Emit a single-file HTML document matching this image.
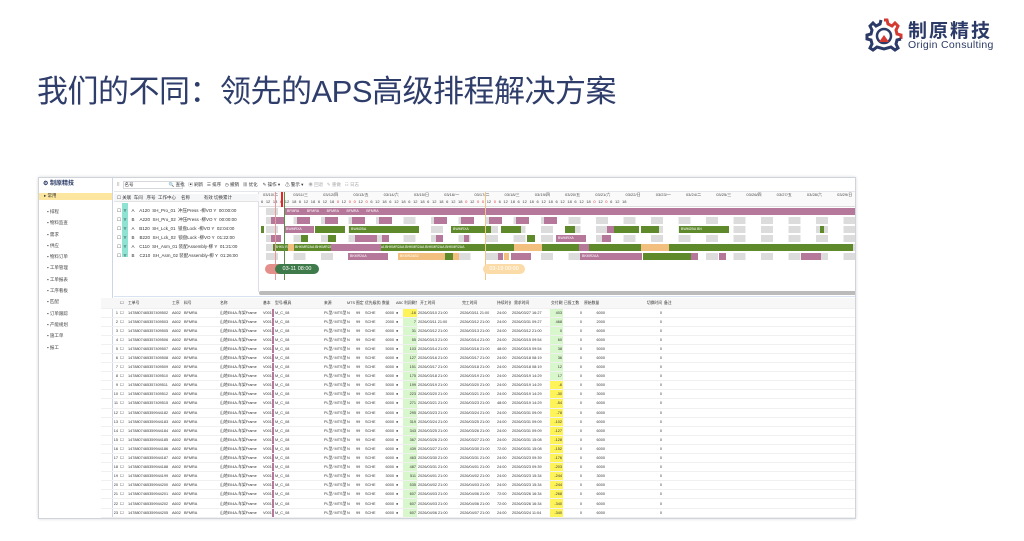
<!DOCTYPE html>
<html><head><meta charset="utf-8"><style>
*{margin:0;padding:0;box-sizing:border-box}
body{width:1024px;height:541px;background:#fff;position:relative;overflow:hidden;font-family:"Liberation Sans","Noto Sans CJK SC",sans-serif}
.a{position:absolute}
.t{font-size:4.5px;color:#333;white-space:nowrap;line-height:1}
.frame{left:38px;top:177px;width:818px;height:342px;border:1px solid #cfd3da;box-shadow:0 0 3px rgba(0,0,0,.15);background:#fff;overflow:hidden}
.bar{position:absolute;height:7px;font-size:3.5px;color:#fff;line-height:7px;padding-left:2px;overflow:hidden;white-space:nowrap}
.p{background:#b5779a}.g{background:#5e8a2b}.o{background:#f2bf7e}
.row{position:absolute;width:598px;height:9px;background:repeating-linear-gradient(90deg,#dcdcdc 0 12px,transparent 12px 27.5px);background-position:7px 0;background-size:auto 7px;background-repeat:repeat-x}
table.lt{position:absolute;left:62px;top:120px;border-collapse:collapse;table-layout:fixed;width:756px}
.lt td{height:9.1px;font-size:3.8px;color:#333;white-space:nowrap;overflow:hidden;padding:0 1px;border-bottom:1px solid #f0f0f0;line-height:8px}
.lt tr.h td{height:10px;background:#f7f7f7;font-size:3.8px}
.lt td.r{text-align:right}
.lt td.gc{background:#d9f7cc}.lt td.yc{background:#fff35a}
.lt td.pk{background:#b5779a;padding:0}
.dot{color:#f5c518}
</style></head><body>

<svg class="a" style="left:864px;top:17px" width="40" height="36" viewBox="0 0 40 36">
<path d="M20 3 L23 3 L24 7 L28 9 L31 6 L34 9 L32 13 L33 17 L37 18 L37 22" fill="none" stroke="#d33a32" stroke-width="3"/>
<path d="M17 3 L16 7 L12 9 L9 6 L6 9 L8 13 L7 17 L3 18 L3 22 L7 23 L8 27 L6 31 L9 33 L13 30 L20 32 L27 30 L31 33 L34 31 L32 27 L33 23 L37 22" fill="none" stroke="#2b3a66" stroke-width="3"/>
<circle cx="20" cy="19" r="7" fill="none" stroke="#2b3a66" stroke-width="2.5"/>
<path d="M15 25 L20 18 L25 25" fill="#d33a32"/>
</svg>
<div class="a" style="left:908px;top:16px;font-size:19px;font-weight:bold;color:#2b3a66;letter-spacing:2px">制原精技</div>
<div class="a" style="left:908px;top:39px;font-size:10.5px;color:#2b3a66;letter-spacing:.3px">Origin Consulting</div>

<div class="a" style="left:37px;top:66px;font-size:31px;color:#2f3d6b;letter-spacing:-.5px">我们的不同：领先的APS高级排程解决方案</div>

<div class="a frame">
 <div class="a" style="left:0;top:0;width:74px;height:342px;border-right:1px solid #cdd6e6;background:#fff"></div>
 <div class="a t" style="left:4px;top:3px;font-size:6px;color:#2b3a66;font-weight:bold">⚙ 制原精技</div>
 <div class="a" style="left:0;top:15px;width:73px;height:7px;background:#fde7a0"></div>
 <div class="a t" style="left:5px;top:16px">▸ 常用</div>
 <div class="a t" style="left:8px;top:28px;line-height:11.3px;color:#444">▪ 排程<br>▪ 物料监查<br>▪ 需求<br>▪ 供应<br>▪ 物料订单<br>▪ 工单管理<br>▪ 工单报表<br>▪ 工序看板<br>▪ 匹配<br>▪ 订单跟踪<br>▪ 产能规划<br>▪ 施工单<br>▪ 报工</div>

 <div class="a" style="left:75px;top:0;width:743px;height:14px;border-bottom:1px solid #e3e6ea"></div>
 <div class="a" style="left:84px;top:3px;width:60px;height:8px;border:1px solid #d5d8dc"></div>
 <div class="a t" style="left:78px;top:5px">⁞⁞ &nbsp;&nbsp;&nbsp;名号 <span style="margin-left:34px">🔍 查找</span> &nbsp; ▣ 刷新 &nbsp; ☰ 排序 &nbsp; ◷ 撤销 &nbsp; ▦ 优化 &nbsp;&nbsp; ✎ 操作 ▾ &nbsp;&nbsp; ⚠ 警示 ▾ &nbsp;&nbsp; <span style="color:#aaa">◉ 回退 &nbsp; ✎ 重做 &nbsp; ☷ 日志</span></div>

 <div class="a" style="left:75px;top:14px;width:145px;height:100px;border-right:1px solid #dde"></div>
 <div class="a" style="left:75px;top:16px;width:145px;height:8px;background:#f5f6f8;border-bottom:1px solid #e3e3e3"></div>
 <div class="a t" style="left:78px;top:18px">☐ 关联 &nbsp;车间 &nbsp;&nbsp;序号 &nbsp;工作中心 &nbsp;&nbsp;&nbsp;名称 &nbsp;&nbsp;&nbsp;&nbsp;&nbsp;&nbsp;&nbsp;&nbsp;&nbsp;&nbsp;有效 切换累计</div>
 <div class="a" style="left:83px;top:25px;width:6px;height:54px;background:#8fe3d2"></div>
 <div class="a t" style="left:78px;top:28px;line-height:9px">☐ &nbsp;Y &nbsp;&nbsp;&nbsp;A &nbsp;&nbsp;&nbsp;A120 &nbsp;SH_Pro_01 &nbsp;冲压Press -柳VO Y &nbsp;00:00:00<br>☐ &nbsp;Y &nbsp;&nbsp;&nbsp;B &nbsp;&nbsp;&nbsp;A220 &nbsp;SH_Pro_02 &nbsp;冲压Press -柳VO Y &nbsp;00:00:00<br>☐ &nbsp;Y &nbsp;&nbsp;&nbsp;A &nbsp;&nbsp;&nbsp;B120 &nbsp;SH_Lck_01 &nbsp;锁盘Lock -柳VO Y &nbsp;02:04:00<br>☐ &nbsp;Y &nbsp;&nbsp;&nbsp;B &nbsp;&nbsp;&nbsp;B220 &nbsp;SH_Lck_02 &nbsp;锁盘Lock -柳VO Y &nbsp;01:22:00<br>☐ &nbsp;Y &nbsp;&nbsp;&nbsp;A &nbsp;&nbsp;&nbsp;C110 &nbsp;SH_Asm_01 装配Assembly-柳 Y &nbsp;01:21:00<br>☐ &nbsp;Y &nbsp;&nbsp;&nbsp;B &nbsp;&nbsp;&nbsp;C210 &nbsp;SH_Asm_02 装配Assembly-柳 Y &nbsp;01:26:00</div>

 <div class="a" style="left:220px;top:14px;width:598px;height:15px;border-bottom:1px solid #ddd;background:#fafafa"></div>
 <div class="a t" style="left:224px;top:15px;font-size:4px;word-spacing:14px;color:#444">03/10/二 03/11/三 03/12/四 03/13/五 03/14/六 03/15/日 03/16/一 03/17/二 03/18/三 03/19/四 03/20/五 03/21/六 03/22/日 03/23/一 03/24/二 03/25/三 03/26/四 03/27/五 03/28/六 03/29/日 03/30/一 03/31/二</div>
 <div class="a t" style="left:222px;top:22px;font-size:4px;word-spacing:1.5px;color:#444">6 12 18 6 12 18 6 12 18 6 12 18 <span style="color:#d33">0</span> 12 <span style="color:#d33">0 0</span> 12 <span style="color:#d33">0</span> 6 12 18 6 12 18 6 12 18 6 12 18 6 12 18 <span style="color:#d33">0</span> 12 <span style="color:#d33">0 0</span> 12 <span style="color:#d33">0</span> 6 12 18 6 12 18 6 12 18 6 12 18 6 12 18 <span style="color:#d33">0</span> 12 <span style="color:#d33">0</span> 6 12 18</div>

 <div class="row" style="top:30px;left:220px"></div>
 <div class="row" style="top:39px;left:220px"></div>
 <div class="row" style="top:48px;left:220px"></div>
 <div class="row" style="top:57px;left:220px"></div>
 <div class="row" style="top:66px;left:220px"></div>
 <div class="row" style="top:75px;left:220px"></div>

 <div class="bar p" style="left:246px;top:30px;width:572px">BFMRA &nbsp;&nbsp;&nbsp;&nbsp;&nbsp;&nbsp;&nbsp;BFMRA &nbsp;&nbsp;&nbsp;&nbsp;&nbsp;&nbsp;&nbsp;BFMRA &nbsp;&nbsp;&nbsp;&nbsp;&nbsp;&nbsp;&nbsp;BFMRA &nbsp;&nbsp;&nbsp;&nbsp;&nbsp;&nbsp;&nbsp;BFMRA</div>
 <div class="bar p" style="left:232px;top:39px;width:13px"></div>
 <div class="bar p" style="left:258px;top:39px;width:13px"></div>
 <div class="bar p" style="left:286px;top:39px;width:13px"></div>
 <div class="bar p" style="left:313px;top:39px;width:13px"></div>
 <div class="bar p" style="left:340px;top:39px;width:13px"></div>
 <div class="bar p" style="left:395px;top:39px;width:13px"></div>
 <div class="bar p" style="left:422px;top:39px;width:13px"></div>
 <div class="bar p" style="left:450px;top:39px;width:13px"></div>
 <div class="bar p" style="left:477px;top:39px;width:13px"></div>
 <div class="bar p" style="left:505px;top:39px;width:13px"></div>
 <div class="bar g" style="left:222px;top:48px;width:3px"></div>
 <div class="bar p" style="left:245px;top:48px;width:30px">BWMRXA</div>
 <div class="bar g" style="left:276px;top:48px;width:30px"></div>
 <div class="bar g" style="left:310px;top:48px;width:70px">BWM2BA</div>
 <div class="bar g" style="left:412px;top:48px;width:40px">BWMRXA</div>
 <div class="bar g" style="left:462px;top:48px;width:20px"></div>
 <div class="bar g" style="left:526px;top:48px;width:10px"></div>
 <div class="bar p" style="left:568px;top:48px;width:7px"></div>
 <div class="bar g" style="left:575px;top:48px;width:25px"></div>
 <div class="bar g" style="left:602px;top:48px;width:18px"></div>
 <div class="bar g" style="left:640px;top:48px;width:50px">BWM2BA BN</div>
 <div class="bar g" style="left:781px;top:48px;width:4px"></div>
 <div class="bar p" style="left:232px;top:57px;width:10px"></div>
 <div class="bar g" style="left:262px;top:57px;width:7px"></div>
 <div class="bar g" style="left:289px;top:57px;width:8px"></div>
 <div class="bar p" style="left:316px;top:57px;width:22px"></div>
 <div class="bar p" style="left:343px;top:57px;width:7px"></div>
 <div class="bar p" style="left:397px;top:57px;width:7px"></div>
 <div class="bar p" style="left:425px;top:57px;width:5px"></div>
 <div class="bar g" style="left:488px;top:57px;width:8px"></div>
 <div class="bar p" style="left:517px;top:57px;width:30px">BWMRXA</div>
 <div class="bar p" style="left:563px;top:57px;width:9px"></div>
 <div class="bar g" style="left:234px;top:66px;width:580px">BHKMR2AA BHKMR2AA BHKMR2AA BHKMR2AB2 &nbsp;&nbsp;&nbsp;&nbsp;&nbsp;&nbsp;&nbsp; BHKMR2AA BHKMR2AA BHKMR2AA BHKMR2AA BHKMR2AA</div>
 <div class="bar p" style="left:292px;top:66px;width:50px"></div>
 <div class="bar o" style="left:249px;top:66px;width:6px"></div>
 <div class="bar o" style="left:475px;top:66px;width:28px"></div>
 <div class="bar p" style="left:540px;top:66px;width:10px"></div>
 <div class="bar o" style="left:602px;top:66px;width:28px"></div>
 <div class="bar p" style="left:309px;top:75px;width:40px">BKMR2AA</div>
 <div class="bar o" style="left:359px;top:75px;width:47px">BKMR2AB2</div>
 <div class="bar g" style="left:406px;top:75px;width:8px"></div>
 <div class="bar o" style="left:414px;top:75px;width:6px"></div>
 <div class="bar p" style="left:459px;top:75px;width:5px"></div>
 <div class="bar o" style="left:465px;top:75px;width:5px"></div>
 <div class="bar p" style="left:472px;top:75px;width:20px"></div>
 <div class="bar p" style="left:541px;top:75px;width:62px">BKMR2AA</div>
 <div class="bar g" style="left:604px;top:75px;width:48px"></div>
 <div class="bar p" style="left:652px;top:75px;width:7px"></div>
 <div class="bar p" style="left:680px;top:75px;width:7px"></div>
 <div class="bar p" style="left:762px;top:75px;width:20px"></div>

 <div class="a" style="left:236px;top:14px;width:1px;height:88px;background:#e69a9a"></div>
 <div class="a" style="left:245px;top:14px;width:1px;height:88px;background:#5e8a4a"></div>
 <div class="a" style="left:242px;top:14px;width:2px;height:15px;background:#e22"></div>
 <div class="a" style="left:446px;top:14px;width:1px;height:88px;background:#f2c58a"></div>
 <div class="a" style="left:226px;top:86px;width:20px;height:10px;border-radius:5px;background:#e58f8a"></div>
 <div class="a t" style="left:236px;top:86px;width:44px;height:10px;border-radius:5px;background:#3f7a4a;color:#fff;font-size:5.5px;line-height:10px;text-align:center">03-11 08:00</div>
 <div class="a t" style="left:444px;top:86px;width:42px;height:10px;border-radius:5px;background:#fbdca8;color:#fff;font-size:5.5px;line-height:10px;text-align:center">03-19 00:00</div>
 <div class="a" style="left:220px;top:113px;width:598px;height:4px;background:#bbb;border-radius:2px"></div>
 <div class="a" style="left:75px;top:118px;width:743px;height:1px;background:#d9e2f0"></div>
 <div class="a" style="left:818px;top:120px;width:1px;height:222px;background:#ddd"></div>

 <table class="lt">
 <colgroup><col style="width:18px"><col style="width:8px"><col style="width:44px"><col style="width:12px"><col style="width:36px"><col style="width:43px"><col style="width:10px"><col style="width:2px"><col style="width:49px"><col style="width:23px"><col style="width:9px"><col style="width:9px"><col style="width:17px"><col style="width:14px"><col style="width:8px"><col style="width:14px"><col style="width:42px"><col style="width:37px"><col style="width:15px"><col style="width:39px"><col style="width:13px"><col style="width:20px"><col style="width:23px"><col style="width:57px"><col></colgroup>
 <tr class="h"><td></td><td>☐</td><td>工单号</td><td>工序</td><td>料号</td><td>名称</td><td>基本</td><td class="pk"></td><td>型号/模具</td><td>来源</td><td>MTS</td><td>图定</td><td>优先级状态</td><td>数量</td><td>ABC</td><td>利润剩余</td><td>&nbsp;&nbsp;开工时间</td><td>&nbsp;&nbsp;完工时间</td><td>持续时长</td><td>&nbsp;&nbsp;需求时间</td><td>交付剩余</td><td>已报工数</td><td>原始数量</td><td class="r">切换时间</td><td>备注</td></tr>
 <tr><td class="r">1</td><td>☐</td><td>1478807465357409502</td><td>A602</td><td>BFMRA</td><td>山地EII4A-车架Frame</td><td>V001</td><td class="pk"></td><td>M_C_08</td><td>PL型/ MTS型</td><td>N</td><td>99</td><td>SCHE</td><td class="r">6000</td><td class="dot">●</td><td class="r yc">-16</td><td>2026/03/10 21:00</td><td>2026/03/11 21:00</td><td>24:00</td><td>2026/03/27 16:27</td><td class="r gc">403</td><td class="r">0</td><td class="r">6000</td><td class="r">0</td><td></td></tr>
 <tr><td class="r">2</td><td>☐</td><td>1478807465357409503</td><td>A602</td><td>BFMRA</td><td>山地EII4A-车架Frame</td><td>V001</td><td class="pk"></td><td>M_C_08</td><td>PL型/ MTS型</td><td>N</td><td>99</td><td>SCHE</td><td class="r">2000</td><td class="dot">●</td><td class="r gc">7</td><td>2026/03/11 21:00</td><td>2026/03/12 21:00</td><td>24:00</td><td>2026/03/31 09:27</td><td class="r gc">468</td><td class="r">0</td><td class="r">2000</td><td class="r">0</td><td></td></tr>
 <tr><td class="r">3</td><td>☐</td><td>1478807465357409505</td><td>A602</td><td>BFMRA</td><td>山地EII4A-车架Frame</td><td>V001</td><td class="pk"></td><td>M_C_08</td><td>PL型/ MTS型</td><td>N</td><td>99</td><td>SCHE</td><td class="r">6000</td><td class="dot">●</td><td class="r gc">31</td><td>2026/03/12 21:00</td><td>2026/03/13 21:00</td><td>24:00</td><td>2026/03/12 21:00</td><td class="r gc">0</td><td class="r">0</td><td class="r">6000</td><td class="r">0</td><td></td></tr>
 <tr><td class="r">4</td><td>☐</td><td>1478807465357409506</td><td>A602</td><td>BFMRA</td><td>山地EII4A-车架Frame</td><td>V001</td><td class="pk"></td><td>M_C_08</td><td>PL型/ MTS型</td><td>N</td><td>99</td><td>SCHE</td><td class="r">6000</td><td class="dot">●</td><td class="r gc">55</td><td>2026/03/13 21:00</td><td>2026/03/14 21:00</td><td>24:00</td><td>2026/03/15 09:54</td><td class="r gc">60</td><td class="r">0</td><td class="r">6000</td><td class="r">0</td><td></td></tr>
 <tr><td class="r">5</td><td>☐</td><td>1478807465357409507</td><td>A602</td><td>BFMRA</td><td>山地EII4A-车架Frame</td><td>V001</td><td class="pk"></td><td>M_C_08</td><td>PL型/ MTS型</td><td>N</td><td>99</td><td>SCHE</td><td class="r">5000</td><td class="dot">●</td><td class="r gc">103</td><td>2026/03/14 21:00</td><td>2026/03/16 21:00</td><td>48:00</td><td>2026/03/15 09:54</td><td class="r gc">38</td><td class="r">0</td><td class="r">5000</td><td class="r">0</td><td></td></tr>
 <tr><td class="r">6</td><td>☐</td><td>1478807465357409508</td><td>A602</td><td>BFMRA</td><td>山地EII4A-车架Frame</td><td>V001</td><td class="pk"></td><td>M_C_08</td><td>PL型/ MTS型</td><td>N</td><td>99</td><td>SCHE</td><td class="r">6000</td><td class="dot">●</td><td class="r gc">127</td><td>2026/03/16 21:00</td><td>2026/03/17 21:00</td><td>24:00</td><td>2026/03/18 08:19</td><td class="r gc">36</td><td class="r">0</td><td class="r">6000</td><td class="r">0</td><td></td></tr>
 <tr><td class="r">7</td><td>☐</td><td>1478807465357409509</td><td>A602</td><td>BFMRA</td><td>山地EII4A-车架Frame</td><td>V001</td><td class="pk"></td><td>M_C_08</td><td>PL型/ MTS型</td><td>N</td><td>99</td><td>SCHE</td><td class="r">6000</td><td class="dot">●</td><td class="r gc">151</td><td>2026/03/17 21:00</td><td>2026/03/18 21:00</td><td>24:00</td><td>2026/03/18 08:19</td><td class="r gc">12</td><td class="r">0</td><td class="r">6000</td><td class="r">0</td><td></td></tr>
 <tr><td class="r">8</td><td>☐</td><td>1478807465357409510</td><td>A602</td><td>BFMRA</td><td>山地EII4A-车架Frame</td><td>V001</td><td class="pk"></td><td>M_C_08</td><td>PL型/ MTS型</td><td>N</td><td>99</td><td>SCHE</td><td class="r">6000</td><td class="dot">●</td><td class="r gc">175</td><td>2026/03/18 21:00</td><td>2026/03/19 21:00</td><td>24:00</td><td>2026/03/19 14:29</td><td class="r gc">17</td><td class="r">0</td><td class="r">6000</td><td class="r">0</td><td></td></tr>
 <tr><td class="r">9</td><td>☐</td><td>1478807465357409511</td><td>A602</td><td>BFMRA</td><td>山地EII4A-车架Frame</td><td>V001</td><td class="pk"></td><td>M_C_08</td><td>PL型/ MTS型</td><td>N</td><td>99</td><td>SCHE</td><td class="r">5000</td><td class="dot">●</td><td class="r gc">199</td><td>2026/03/19 21:00</td><td>2026/03/20 21:00</td><td>24:00</td><td>2026/03/19 14:29</td><td class="r yc">-6</td><td class="r">0</td><td class="r">5000</td><td class="r">0</td><td></td></tr>
 <tr><td class="r">10</td><td>☐</td><td>1478807465357409512</td><td>A602</td><td>BFMRA</td><td>山地EII4A-车架Frame</td><td>V001</td><td class="pk"></td><td>M_C_08</td><td>PL型/ MTS型</td><td>N</td><td>99</td><td>SCHE</td><td class="r">3000</td><td class="dot">●</td><td class="r gc">223</td><td>2026/03/20 21:00</td><td>2026/03/21 21:00</td><td>24:00</td><td>2026/03/19 14:29</td><td class="r yc">-30</td><td class="r">0</td><td class="r">3000</td><td class="r">0</td><td></td></tr>
 <tr><td class="r">11</td><td>☐</td><td>1478807465357409515</td><td>A602</td><td>BFMRA</td><td>山地EII4A-车架Frame</td><td>V001</td><td class="pk"></td><td>M_C_08</td><td>PL型/ MTS型</td><td>N</td><td>99</td><td>SCHE</td><td class="r">6000</td><td class="dot">●</td><td class="r gc">271</td><td>2026/03/21 21:00</td><td>2026/03/23 21:00</td><td>48:00</td><td>2026/03/19 14:29</td><td class="r yc">-54</td><td class="r">0</td><td class="r">6000</td><td class="r">0</td><td></td></tr>
 <tr><td class="r">12</td><td>☐</td><td>1478807465359944182</td><td>A602</td><td>BFMRA</td><td>山地EII4A-车架Frame</td><td>V001</td><td class="pk"></td><td>M_C_08</td><td>PL型/ MTS型</td><td>N</td><td>99</td><td>SCHE</td><td class="r">6000</td><td class="dot">●</td><td class="r gc">295</td><td>2026/03/23 21:00</td><td>2026/03/24 21:00</td><td>24:00</td><td>2026/03/31 09:09</td><td class="r yc">-78</td><td class="r">0</td><td class="r">6000</td><td class="r">0</td><td></td></tr>
 <tr><td class="r">13</td><td>☐</td><td>1478807465359944183</td><td>A602</td><td>BFMRA</td><td>山地EII4A-车架Frame</td><td>V001</td><td class="pk"></td><td>M_C_08</td><td>PL型/ MTS型</td><td>N</td><td>99</td><td>SCHE</td><td class="r">6000</td><td class="dot">●</td><td class="r gc">319</td><td>2026/03/24 21:00</td><td>2026/03/25 21:00</td><td>24:00</td><td>2026/03/31 09:09</td><td class="r yc">-102</td><td class="r">0</td><td class="r">6000</td><td class="r">0</td><td></td></tr>
 <tr><td class="r">14</td><td>☐</td><td>1478807465359944184</td><td>A602</td><td>BFMRA</td><td>山地EII4A-车架Frame</td><td>V001</td><td class="pk"></td><td>M_C_08</td><td>PL型/ MTS型</td><td>N</td><td>99</td><td>SCHE</td><td class="r">6000</td><td class="dot">●</td><td class="r gc">343</td><td>2026/03/25 21:00</td><td>2026/03/26 21:00</td><td>24:00</td><td>2026/03/31 09:09</td><td class="r yc">-127</td><td class="r">0</td><td class="r">6000</td><td class="r">0</td><td></td></tr>
 <tr><td class="r">15</td><td>☐</td><td>1478807465359944185</td><td>A602</td><td>BFMRA</td><td>山地EII4A-车架Frame</td><td>V001</td><td class="pk"></td><td>M_C_08</td><td>PL型/ MTS型</td><td>N</td><td>99</td><td>SCHE</td><td class="r">6000</td><td class="dot">●</td><td class="r gc">367</td><td>2026/03/26 21:00</td><td>2026/03/27 21:00</td><td>24:00</td><td>2026/03/31 15:08</td><td class="r yc">-128</td><td class="r">0</td><td class="r">6000</td><td class="r">0</td><td></td></tr>
 <tr><td class="r">16</td><td>☐</td><td>1478807465359944186</td><td>A602</td><td>BFMRA</td><td>山地EII4A-车架Frame</td><td>V001</td><td class="pk"></td><td>M_C_08</td><td>PL型/ MTS型</td><td>N</td><td>99</td><td>SCHE</td><td class="r">6000</td><td class="dot">●</td><td class="r gc">439</td><td>2026/03/27 21:00</td><td>2026/03/30 21:00</td><td>72:00</td><td>2026/03/31 15:08</td><td class="r yc">-152</td><td class="r">0</td><td class="r">6000</td><td class="r">0</td><td></td></tr>
 <tr><td class="r">17</td><td>☐</td><td>1478807465359944187</td><td>A602</td><td>BFMRA</td><td>山地EII4A-车架Frame</td><td>V001</td><td class="pk"></td><td>M_C_08</td><td>PL型/ MTS型</td><td>N</td><td>99</td><td>SCHE</td><td class="r">6000</td><td class="dot">●</td><td class="r gc">463</td><td>2026/03/30 21:00</td><td>2026/03/31 21:00</td><td>24:00</td><td>2026/03/23 09:39</td><td class="r yc">-176</td><td class="r">0</td><td class="r">6000</td><td class="r">0</td><td></td></tr>
 <tr><td class="r">18</td><td>☐</td><td>1478807465359944188</td><td>A602</td><td>BFMRA</td><td>山地EII4A-车架Frame</td><td>V001</td><td class="pk"></td><td>M_C_08</td><td>PL型/ MTS型</td><td>N</td><td>99</td><td>SCHE</td><td class="r">6000</td><td class="dot">●</td><td class="r gc">487</td><td>2026/03/31 21:00</td><td>2026/04/01 21:00</td><td>24:00</td><td>2026/03/23 09:39</td><td class="r yc">-203</td><td class="r">0</td><td class="r">6000</td><td class="r">0</td><td></td></tr>
 <tr><td class="r">19</td><td>☐</td><td>1478807465359944199</td><td>A602</td><td>BFMRA</td><td>山地EII4A-车架Frame</td><td>V001</td><td class="pk"></td><td>M_C_08</td><td>PL型/ MTS型</td><td>N</td><td>99</td><td>SCHE</td><td class="r">3000</td><td class="dot">●</td><td class="r gc">511</td><td>2026/04/01 21:00</td><td>2026/04/02 21:00</td><td>24:00</td><td>2026/03/23 15:34</td><td class="r yc">-244</td><td class="r">0</td><td class="r">3000</td><td class="r">0</td><td></td></tr>
 <tr><td class="r">20</td><td>☐</td><td>1478807465359944200</td><td>A602</td><td>BFMRA</td><td>山地EII4A-车架Frame</td><td>V001</td><td class="pk"></td><td>M_C_08</td><td>PL型/ MTS型</td><td>N</td><td>99</td><td>SCHE</td><td class="r">6000</td><td class="dot">●</td><td class="r gc">535</td><td>2026/04/02 21:00</td><td>2026/04/03 21:00</td><td>24:00</td><td>2026/03/23 15:34</td><td class="r yc">-244</td><td class="r">0</td><td class="r">6000</td><td class="r">0</td><td></td></tr>
 <tr><td class="r">21</td><td>☐</td><td>1478807465359944201</td><td>A602</td><td>BFMRA</td><td>山地EII4A-车架Frame</td><td>V001</td><td class="pk"></td><td>M_C_08</td><td>PL型/ MTS型</td><td>N</td><td>99</td><td>SCHE</td><td class="r">6000</td><td class="dot">●</td><td class="r gc">607</td><td>2026/04/03 21:00</td><td>2026/04/06 21:00</td><td>72:00</td><td>2026/03/26 16:34</td><td class="r yc">-268</td><td class="r">0</td><td class="r">6000</td><td class="r">0</td><td></td></tr>
 <tr><td class="r">22</td><td>☐</td><td>1478807465359944202</td><td>A602</td><td>BFMRA</td><td>山地EII4A-车架Frame</td><td>V001</td><td class="pk"></td><td>M_C_08</td><td>PL型/ MTS型</td><td>N</td><td>99</td><td>SCHE</td><td class="r">6000</td><td class="dot">●</td><td class="r gc">607</td><td>2026/04/03 21:00</td><td>2026/04/06 21:00</td><td>72:00</td><td>2026/03/26 16:34</td><td class="r yc">-340</td><td class="r">0</td><td class="r">6000</td><td class="r">0</td><td></td></tr>
 <tr><td class="r">23</td><td>☐</td><td>1478807465359944205</td><td>A602</td><td>BFMRA</td><td>山地EII4A-车架Frame</td><td>V001</td><td class="pk"></td><td>M_C_08</td><td>PL型/ MTS型</td><td>N</td><td>99</td><td>SCHE</td><td class="r">6000</td><td class="dot">●</td><td class="r gc">607</td><td>2026/04/06 21:00</td><td>2026/04/07 21:00</td><td>24:00</td><td>2026/03/24 11:04</td><td class="r yc">-340</td><td class="r">0</td><td class="r">6000</td><td class="r">0</td><td></td></tr>
 </table>
</div>
</body></html>
